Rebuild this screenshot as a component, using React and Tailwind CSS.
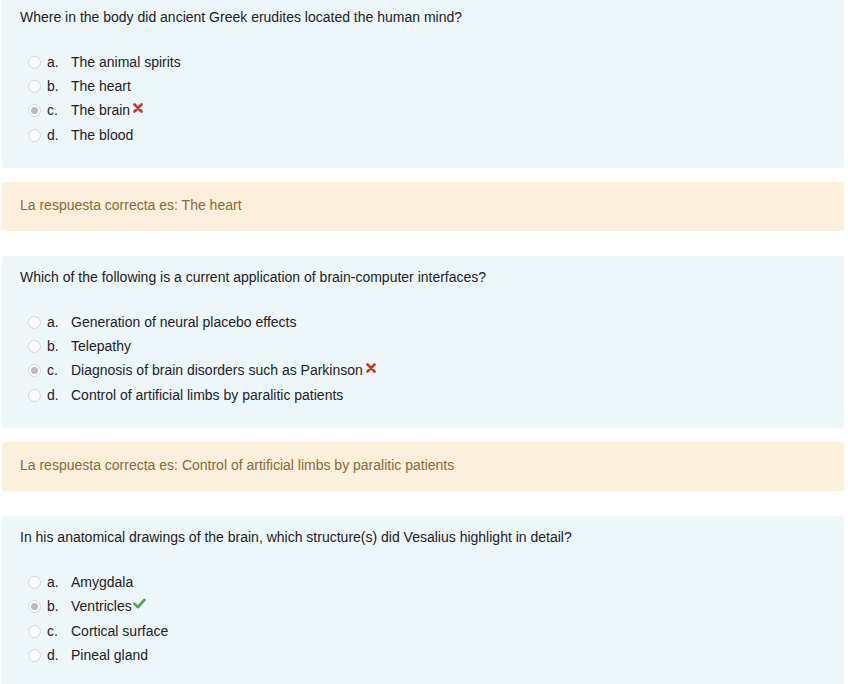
import React from "react";

const questions = [
  {
    text: "Where in the body did ancient Greek erudites located the human mind?",
    options: ["The animal spirits", "The heart", "The brain", "The blood"],
    selected: 2,
    correct: false,
    answer: "The heart",
  },
  {
    text: "Which of the following is a current application of brain-computer interfaces?",
    options: [
      "Generation of neural placebo effects",
      "Telepathy",
      "Diagnosis of brain disorders such as Parkinson",
      "Control of artificial limbs by paralitic patients",
    ],
    selected: 2,
    correct: false,
    answer: "Control of artificial limbs by paralitic patients",
  },
  {
    text: "In his anatomical drawings of the brain, which structure(s) did Vesalius highlight in detail?",
    options: ["Amygdala", "Ventricles", "Cortical surface", "Pineal gland"],
    selected: 1,
    correct: true,
  },
];

const letters = ["a.", "b.", "c.", "d."];

const Radio = ({ checked }) => (
  <span className="w-[13px] h-[13px] rounded-full border border-[#d4d6d8] bg-[#fbfbfb] flex items-center justify-center shrink-0">
    {checked && <span className="w-[7px] h-[7px] rounded-full bg-[#b9bbbd]" />}
  </span>
);

const Cross = () => (
  <svg viewBox="0 0 10 10" className="w-[10px] h-[10px] ml-[3px] -mt-[6px]">
    <path d="M1.5 1.5 L8.5 8.5 M8.5 1.5 L1.5 8.5" stroke="#c8372b" strokeWidth="2.6" strokeLinecap="round" />
  </svg>
);

const Check = () => (
  <svg viewBox="0 0 12 10" className="w-[13px] h-[11px] ml-[1px] -mt-[6px]">
    <path d="M1.5 5.5 L4.5 8.3 L10.5 1.7" fill="none" stroke="#4aa552" strokeWidth="2.6" strokeLinecap="round" strokeLinejoin="round" />
  </svg>
);

const Question = ({ q }) => (
  <div className="bg-[#edf7fa] rounded-[3px] pl-[18px] pr-4 pt-[11px] pb-[21px]">
    <p className="leading-5">{q.text}</p>
    <div className="mt-[23px] flex flex-col">
      {q.options.map((opt, i) => (
        <div key={i} className="flex items-center h-[24.3px] pl-[8px]">
          <Radio checked={i === q.selected} />
          <span className="w-[24px] ml-[6px]">{letters[i]}</span>
          <span>{opt}</span>
          {i === q.selected && (q.correct ? <Check /> : <Cross />)}
        </div>
      ))}
    </div>
  </div>
);

const Feedback = ({ answer }) => (
  <div className="bg-[#fcefdc] rounded-[3px] h-[49px] pt-[13px] leading-5 pl-[18px] text-[#8c6a37] mt-[14px] mb-[25px]">
    La respuesta correcta es: {answer}
  </div>
);

export default function App() {
  return (
    <div
      className="bg-white min-h-screen px-[2px] -mt-[4px] text-[14px] text-[#1d2125]"
      style={{ fontFamily: "'Liberation Sans', Arial, sans-serif" }}
    >
      <div className="w-[842px]">
        {questions.map((q, i) => (
          <div key={i}>
            <Question q={q} />
            {q.answer && <Feedback answer={q.answer} />}
          </div>
        ))}
      </div>
    </div>
  );
}
